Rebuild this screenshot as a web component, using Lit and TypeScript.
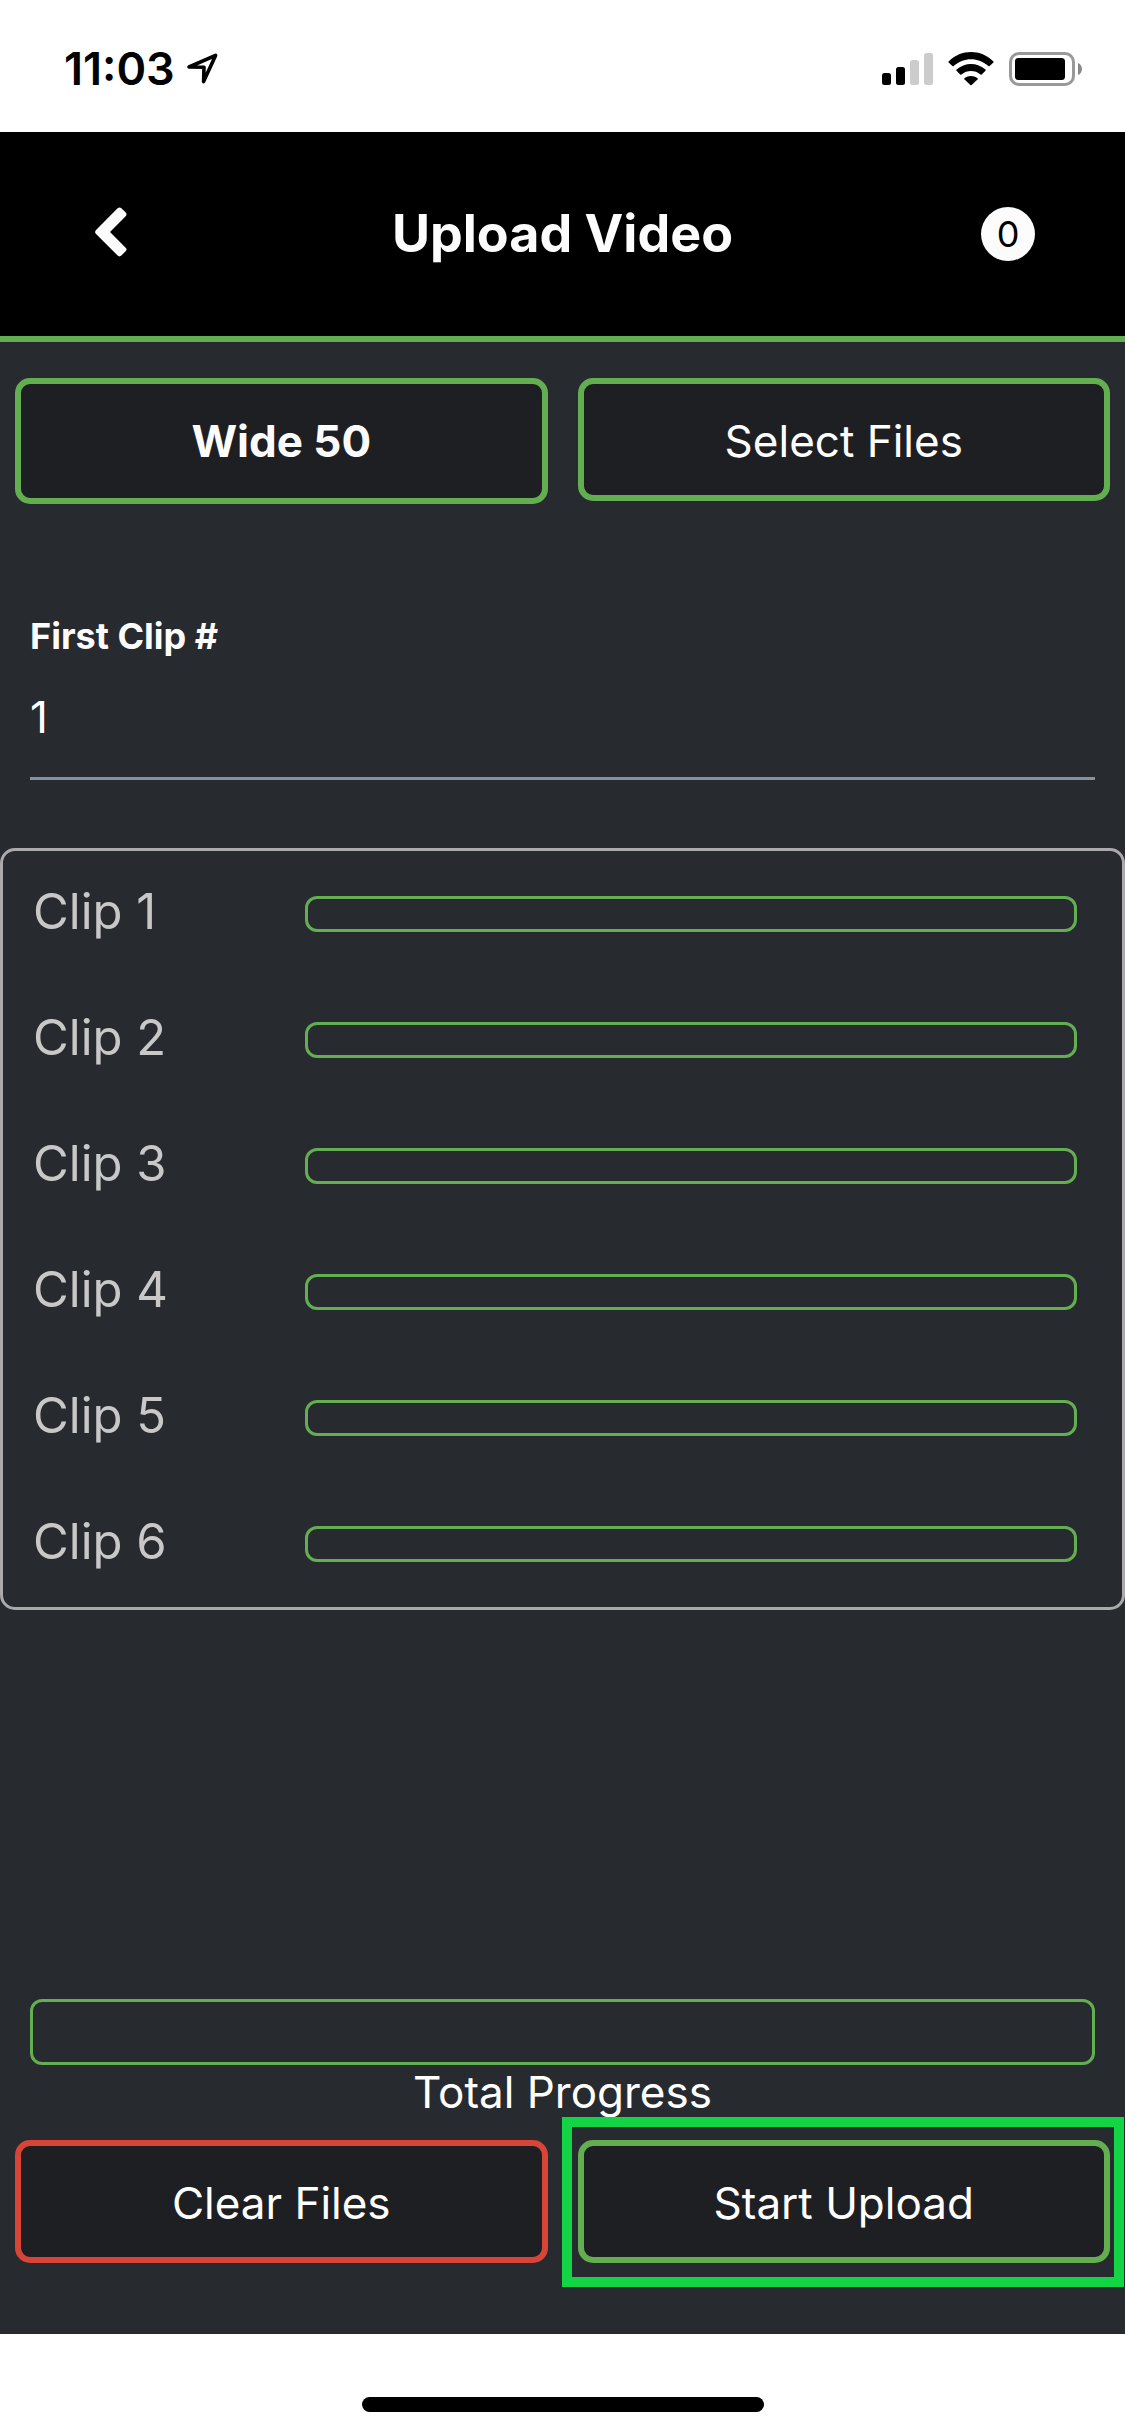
import { LitElement, html, css } from "lit";
import { customElement, property, state } from "lit/decorators.js";

@customElement("status-bar")
class StatusBar extends LitElement {
  static styles = css`
    :host {
      display: flex;
      align-items: center;
      justify-content: space-between;
      height: 132px;
      padding: 6px 43px 0 64px;
      box-sizing: border-box;
      background: #fff;
      color: #000;
    }
    .side {
      display: flex;
      align-items: center;
    }
    .left {
      gap: 11px;
    }
    .right {
      gap: 15px;
    }
    .time {
      font-size: 45px;
      line-height: 54px;
      font-weight: 600;
    }
    svg {
      display: block;
    }
  `;

  render() {
    return html`
      <div class="side left">
        <span class="time">11:03</span>
        <svg width="32" height="32" viewBox="0 0 32 32" aria-hidden="true">
          <path d="M3 14 L29.6 2.4 L17.6 28.6 L18 14.3 Z" fill="none" stroke="#000" stroke-width="3.6" stroke-linejoin="round" />
        </svg>
      </div>
      <div class="side right">
        <svg width="51" height="34" viewBox="0 0 51 34" aria-hidden="true">
          <rect x="0" y="21" width="9" height="12" rx="2.5" />
          <rect x="14" y="15" width="9" height="18" rx="2.5" />
          <rect x="28" y="8" width="9" height="25" rx="2.5" fill="#ccc" />
          <rect x="42" y="1" width="9" height="32" rx="2.5" fill="#ccc" />
        </svg>
        <svg width="46" height="34" viewBox="0 0 46 34" aria-hidden="true">
          <path d="M0.6 9.4 C13.2 -3.1 32.8 -3.1 45.4 9.4 Q45.9 10 45.4 10.5 L41.6 14.1 Q41 14.6 40.4 14.1 C30.6 4.9 15.4 4.9 5.6 14.1 Q5 14.6 4.4 14.1 L0.6 10.5 Q0.1 10 0.6 9.4 Z" />
          <path d="M8.5 17.6 C16.7 10.1 29.3 10.1 37.5 17.6 Q38 18.2 37.5 18.8 L33.7 22.4 Q33.1 22.9 32.5 22.4 C27.1 17.8 18.9 17.8 13.5 22.4 Q12.9 22.9 12.3 22.4 L8.5 18.8 Q8 18.2 8.5 17.6 Z" />
          <path d="M16.5 26.3 C20.3 23.2 25.7 23.2 29.5 26.3 Q30 26.8 29.5 27.4 L23.6 33 Q23 33.5 22.4 33 L16.5 27.4 Q16 26.8 16.5 26.3 Z" />
        </svg>
        <svg width="73" height="34" viewBox="0 0 73 34" aria-hidden="true">
          <rect x="1.5" y="1.5" width="63" height="31" rx="8.5" fill="none" stroke="#999" stroke-width="3" />
          <rect x="6" y="6" width="50" height="22" rx="3.5" />
          <path d="M69 11 C74.3 13 74.3 21 69 23 Z" fill="#888" />
        </svg>
      </div>
    `;
  }
}

@customElement("clip-row")
class ClipRow extends LitElement {
  @property({ type: Number }) number = 1;
  @property({ type: Number }) progress = 0;

  static styles = css`
    :host {
      display: grid;
      grid-template-columns: 272px 1fr;
      align-items: center;
      height: 126px;
      padding: 0 45px 0 30px;
      box-sizing: border-box;
    }
    .name {
      padding-bottom: 4px;
      font-size: 49px;
      line-height: 60px;
      color: #c8c8c8;
    }
    .bar {
      appearance: none;
      display: block;
      width: 100%;
      height: 36px;
      box-sizing: border-box;
      border: 3px solid #63ae50;
      border-radius: 12px;
      background: transparent;
      overflow: hidden;
    }
    .bar::-webkit-progress-bar {
      background: transparent;
    }
    .bar::-webkit-progress-value {
      background: #63ae50;
    }
  `;

  render() {
    return html`
      <label class="name" for="bar">Clip ${this.number}</label>
      <progress class="bar" id="bar" max="100" .value=${this.progress}></progress>
    `;
  }
}

@customElement("app-root")
class AppRoot extends LitElement {
  @state() private firstClip = 1;
  @state() private clipCount = 6;
  @state() private queued = 0;

  static styles = css`
    :host {
      display: flex;
      flex-direction: column;
      min-height: 100vh;
      background: #272a2f;
      color: #fff;
      font-family: Inter, "Liberation Sans", sans-serif;
      font-size: 44px;
      line-height: 54px;
    }
    button,
    input {
      font: inherit;
      color: inherit;
      margin: 0;
    }
    .header {
      display: grid;
      grid-template-columns: 1fr auto 1fr;
      align-items: center;
      height: 210px;
      padding: 0 90px;
      box-sizing: border-box;
      border-bottom: 6px solid #63ae50;
      background: #000;
      color: #fcfcfc;
    }
    .back {
      justify-self: start;
      padding: 0 5px 5px;
      border: 0;
      background: none;
    }
    .back svg {
      display: block;
    }
    .title {
      margin: 0;
      font-size: 52px;
      line-height: 64px;
      font-weight: 700;
    }
    .count {
      justify-self: end;
      display: grid;
      place-items: center;
      width: 54px;
      height: 54px;
      border-radius: 50%;
      background: #fcfcfc;
      color: #000;
      font-size: 36px;
      line-height: 44px;
    }
    .main {
      flex: 1;
      display: flex;
      flex-direction: column;
      padding: 36px 0 71px;
    }
    .pair {
      display: grid;
      grid-template-columns: 1fr 1fr;
      gap: 30px;
      align-items: start;
      padding: 0 15px;
    }
    .action {
      width: 100%;
      padding: 30px 0 27px;
      border: 6px solid #63ae50;
      border-radius: 15px;
      background: #1e1f23;
      text-align: center;
    }
    .strong {
      padding-bottom: 30px;
      font-weight: 700;
      color: #fcfcfc;
    }
    .danger {
      border-color: #d84436;
    }
    .highlight {
      position: relative;
    }
    .highlight::after {
      content: "";
      position: absolute;
      inset: -23px -14px -24px -16px;
      border: 10px solid #12d444;
      pointer-events: none;
    }
    .field {
      display: flex;
      flex-direction: column;
      padding: 110px 30px 68px;
    }
    .label {
      font-size: 36px;
      line-height: 44px;
      font-weight: 700;
      color: #fcfcfc;
    }
    .input {
      width: 100%;
      height: 122px;
      box-sizing: border-box;
      padding: 0 0 2px;
      border: 0;
      border-bottom: 3px solid #86939e;
      border-radius: 0;
      outline: 0;
      background: none;
    }
    .clips {
      border: 3px solid #aaa;
      border-radius: 15px;
    }
    .footer {
      margin-top: auto;
      display: flex;
      flex-direction: column;
    }
    .total {
      display: flex;
      flex-direction: column;
      align-items: center;
      padding: 0 30px 21px;
    }
    .total-bar {
      appearance: none;
      display: block;
      width: 100%;
      height: 66px;
      box-sizing: border-box;
      border: 3px solid #63ae50;
      border-radius: 12px;
      background: transparent;
      overflow: hidden;
    }
    .total-bar::-webkit-progress-bar {
      background: transparent;
    }
    .total-bar::-webkit-progress-value {
      background: #63ae50;
    }
    .home {
      display: flex;
      justify-content: center;
      padding: 63px 0 24px;
      background: #fff;
    }
    .indicator {
      width: 402px;
      height: 15px;
      border-radius: 8px;
      background: #000;
    }
  `;

  private onFirstClip(event: Event) {
    this.firstClip = Number((event.target as HTMLInputElement).value) || 1;
  }

  render() {
    const clips = Array.from({ length: this.clipCount }, (_, i) => this.firstClip + i);
    return html`
      <status-bar></status-bar>
      <header class="header">
        <button class="back" aria-label="Back">
          <svg width="32" height="50" viewBox="0 0 32 50" aria-hidden="true">
            <path d="M22.6 1.2 Q24.5 -0.4 26.4 1.2 L30.9 5.7 Q32.2 7.3 30.9 8.9 L15 25 L30.9 40.9 Q32.2 42.5 30.9 44.1 L26.4 48.6 Q24.5 50.2 22.6 48.6 L0.8 26.8 Q-0.6 25 0.8 23.2 Z" fill="#fcfcfc" />
          </svg>
        </button>
        <h1 class="title">Upload Video</h1>
        <span class="count">${this.queued}</span>
      </header>
      <main class="main">
        <div class="pair">
          <button class="action strong">Wide 50</button>
          <button class="action">Select Files</button>
        </div>
        <div class="field">
          <label class="label" for="first-clip">First Clip #</label>
          <input class="input" id="first-clip" type="text" inputmode="numeric" .value=${String(this.firstClip)} @change=${this.onFirstClip} />
        </div>
        <section class="clips">
          ${clips.map((n) => html`<clip-row .number=${n}></clip-row>`)}
        </section>
        <div class="footer">
          <div class="total">
            <progress class="total-bar" id="total" max="100" value="0"></progress>
            <label for="total">Total Progress</label>
          </div>
          <div class="pair">
            <button class="action danger">Clear Files</button>
            <div class="highlight">
              <button class="action">Start Upload</button>
            </div>
          </div>
        </div>
      </main>
      <div class="home"><div class="indicator"></div></div>
    `;
  }
}
